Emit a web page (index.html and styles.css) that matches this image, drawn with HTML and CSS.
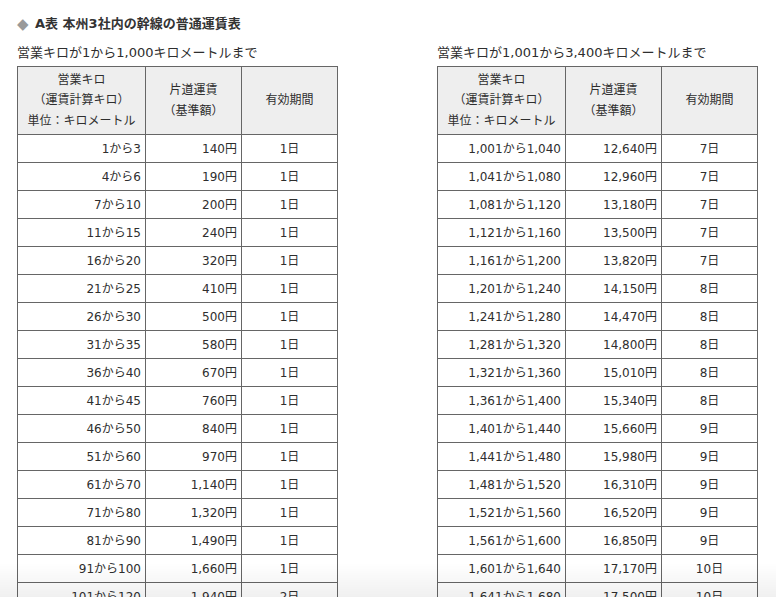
FILE: index.html
```html
<!DOCTYPE html>
<html lang="ja">
<head>
<meta charset="utf-8">
<title>A表 本州3社内の幹線の普通運賃表</title>
<link rel="stylesheet" href="styles.css">
</head>
<body>
<div class="page">
  <h2 class="title"><span class="diamond">◆</span>A表 本州3社内の幹線の普通運賃表</h2>
  <div class="tables">
    <div class="block">
      <p class="caption">営業キロが1から1,000キロメートルまで</p>
      <table class="fare">
        <colgroup><col class="c1"><col class="c2"><col class="c3"></colgroup>
        <thead>
          <tr><th>営業キロ<br>（運賃計算キロ）<br>単位：キロメートル</th><th>片道運賃<br>（基準額）</th><th>有効期間</th></tr>
        </thead>
        <tbody>
          <tr><td class="r">1から3</td><td class="r">140円</td><td class="c">1日</td></tr>
          <tr><td class="r">4から6</td><td class="r">190円</td><td class="c">1日</td></tr>
          <tr><td class="r">7から10</td><td class="r">200円</td><td class="c">1日</td></tr>
          <tr><td class="r">11から15</td><td class="r">240円</td><td class="c">1日</td></tr>
          <tr><td class="r">16から20</td><td class="r">320円</td><td class="c">1日</td></tr>
          <tr><td class="r">21から25</td><td class="r">410円</td><td class="c">1日</td></tr>
          <tr><td class="r">26から30</td><td class="r">500円</td><td class="c">1日</td></tr>
          <tr><td class="r">31から35</td><td class="r">580円</td><td class="c">1日</td></tr>
          <tr><td class="r">36から40</td><td class="r">670円</td><td class="c">1日</td></tr>
          <tr><td class="r">41から45</td><td class="r">760円</td><td class="c">1日</td></tr>
          <tr><td class="r">46から50</td><td class="r">840円</td><td class="c">1日</td></tr>
          <tr><td class="r">51から60</td><td class="r">970円</td><td class="c">1日</td></tr>
          <tr><td class="r">61から70</td><td class="r">1,140円</td><td class="c">1日</td></tr>
          <tr><td class="r">71から80</td><td class="r">1,320円</td><td class="c">1日</td></tr>
          <tr><td class="r">81から90</td><td class="r">1,490円</td><td class="c">1日</td></tr>
          <tr><td class="r">91から100</td><td class="r">1,660円</td><td class="c">1日</td></tr>
          <tr><td class="r">101から120</td><td class="r">1,940円</td><td class="c">2日</td></tr>
        </tbody>
      </table>
    </div>
    <div class="block">
      <p class="caption">営業キロが1,001から3,400キロメートルまで</p>
      <table class="fare">
        <colgroup><col class="c1"><col class="c2"><col class="c3"></colgroup>
        <thead>
          <tr><th>営業キロ<br>（運賃計算キロ）<br>単位：キロメートル</th><th>片道運賃<br>（基準額）</th><th>有効期間</th></tr>
        </thead>
        <tbody>
          <tr><td class="r">1,001から1,040</td><td class="r">12,640円</td><td class="c">7日</td></tr>
          <tr><td class="r">1,041から1,080</td><td class="r">12,960円</td><td class="c">7日</td></tr>
          <tr><td class="r">1,081から1,120</td><td class="r">13,180円</td><td class="c">7日</td></tr>
          <tr><td class="r">1,121から1,160</td><td class="r">13,500円</td><td class="c">7日</td></tr>
          <tr><td class="r">1,161から1,200</td><td class="r">13,820円</td><td class="c">7日</td></tr>
          <tr><td class="r">1,201から1,240</td><td class="r">14,150円</td><td class="c">8日</td></tr>
          <tr><td class="r">1,241から1,280</td><td class="r">14,470円</td><td class="c">8日</td></tr>
          <tr><td class="r">1,281から1,320</td><td class="r">14,800円</td><td class="c">8日</td></tr>
          <tr><td class="r">1,321から1,360</td><td class="r">15,010円</td><td class="c">8日</td></tr>
          <tr><td class="r">1,361から1,400</td><td class="r">15,340円</td><td class="c">8日</td></tr>
          <tr><td class="r">1,401から1,440</td><td class="r">15,660円</td><td class="c">9日</td></tr>
          <tr><td class="r">1,441から1,480</td><td class="r">15,980円</td><td class="c">9日</td></tr>
          <tr><td class="r">1,481から1,520</td><td class="r">16,310円</td><td class="c">9日</td></tr>
          <tr><td class="r">1,521から1,560</td><td class="r">16,520円</td><td class="c">9日</td></tr>
          <tr><td class="r">1,561から1,600</td><td class="r">16,850円</td><td class="c">9日</td></tr>
          <tr><td class="r">1,601から1,640</td><td class="r">17,170円</td><td class="c">10日</td></tr>
          <tr><td class="r">1,641から1,680</td><td class="r">17,500円</td><td class="c">10日</td></tr>
        </tbody>
      </table>
    </div>
  </div>
</div>
<div class="fade"></div>
</body>
</html>
```
FILE: styles.css
```css
html, body {
  margin: 0;
  padding: 0;
  background: #fff;
}
body {
  font-family: "DejaVu Sans", "Noto Sans CJK JP", sans-serif;
  color: #2e2e2e;
}
.page {
  padding: 14px 0 0 17px;
}
.title {
  margin: 0;
  font-size: 13px;
  font-weight: bold;
  line-height: 20px;
  color: #333;
}
.diamond {
  display: inline-block;
  color: #9a9a9a;
  font-size: 15px;
  line-height: 20px;
  font-weight: normal;
  width: 18px;
  vertical-align: top;
}
.tables {
  display: flex;
  gap: 100px;
  margin-top: 10px;
}
.block {
  width: 320px;
}
.caption {
  margin: 0 0 4px;
  font-size: 13px;
  line-height: 18px;
  white-space: nowrap;
}
.fare {
  border-collapse: collapse;
  table-layout: fixed;
  width: 320px;
  font-size: 12px;
}
.c1 { width: 128px; }
.c2 { width: 96px; }
.c3 { width: 96px; }
.fare th,
.fare td {
  border: 1px solid #666;
  padding: 0 4px;
}
.fare th {
  background: #eee;
  font-weight: normal;
  height: 67px;
  line-height: 20.5px;
  text-align: center;
  vertical-align: middle;
  white-space: nowrap;
}
.fare td {
  height: 27px;
  line-height: 18px;
  white-space: nowrap;
}
.r { text-align: right; }
.c { text-align: center; }
.fade {
  position: fixed;
  left: 0;
  right: 0;
  bottom: 0;
  height: 34px;
  background: linear-gradient(rgba(0, 0, 0, 0), rgba(0, 0, 0, 0.06));
  pointer-events: none;
}
```
